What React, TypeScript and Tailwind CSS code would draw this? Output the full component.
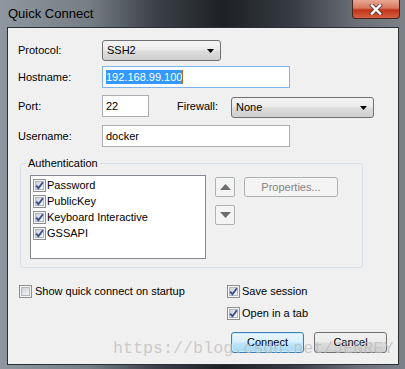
import React from "react";

function Check({ checked }: { checked: boolean }) {
  return (
    <svg width="13" height="13" viewBox="0 0 13 13" className="shrink-0">
      <defs>
        <linearGradient id="cbg" x1="0" y1="0" x2="1" y2="1">
          <stop offset="0" stopColor="#cbcfd5" />
          <stop offset="1" stopColor="#f6f6f6" />
        </linearGradient>
      </defs>
      <rect x="0.5" y="0.5" width="12" height="12" fill="#f4f4f4" stroke="#8f8f8f" />
      <rect x="2.5" y="2.5" width="8" height="8" fill="url(#cbg)" stroke="#b3b8be" />
      {checked && (
        <path d="M3.2 6.6 L5.4 9.2 L9.9 3.2" fill="none" stroke="#3b4f8e" strokeWidth="1.9" />
      )}
    </svg>
  );
}

function Select({ value, width }: { value: string; width: string }) {
  return (
    <div
      className={`${width} h-[21px] flex items-center justify-between pl-[4px] pr-[6px] border border-[#707070] rounded-[3px] bg-[linear-gradient(180deg,#f3f3f3_0%,#ebebeb_48%,#dddddd_52%,#cfcfcf_100%)]`}
    >
      <span>{value}</span>
      <svg width="7" height="4" viewBox="0 0 7 4">
        <polygon points="0,0 7,0 3.5,4" fill="#000" />
      </svg>
    </div>
  );
}

function Arrow({ up }: { up: boolean }) {
  return (
    <div className="w-[20px] h-[20px] flex items-center justify-center border border-[#adb2b5] rounded-[2px] bg-[#f4f4f4]">
      <svg width="11" height="6" viewBox="0 0 11 6">
        <polygon points={up ? "0,6 11,6 5.5,0" : "0,0 11,0 5.5,6"} fill="#6d6d6d" />
      </svg>
    </div>
  );
}

export default function App() {
  return (
    <div className="relative w-[405px] h-[369px] flex flex-col overflow-hidden font-['Liberation_Sans',Arial,sans-serif] text-[11px] text-black bg-[linear-gradient(90deg,#8e979f_0%,#767d84_22%,#3d4248_38%,#1d2125_55%,#363b41_72%,#6a7076_88%,#7c8287_100%)]">
      {/* title bar */}
      <div className="h-[27px] shrink-0 flex items-start justify-between">
        <span className="pl-[8px] pt-[6px] text-[13px] leading-[16px] text-black">Quick Connect</span>
        <div className="mr-[5px] w-[48px] h-[19px] flex items-center justify-center rounded-b-[4px] border border-t-0 border-[#4a2520] bg-[linear-gradient(180deg,#e9a894_0%,#d8765e_45%,#c0351b_55%,#d4603f_100%)]">
          <svg width="14" height="11" viewBox="0 0 14 11">
            <path d="M3 1.5 L11 9.5 M11 1.5 L3 9.5" stroke="#5b3a36" strokeWidth="4" strokeLinecap="square" />
            <path d="M3 1.5 L11 9.5 M11 1.5 L3 9.5" stroke="#ffffff" strokeWidth="2.4" strokeLinecap="square" />
          </svg>
        </div>
      </div>

      {/* client area */}
      <div className="flex-1 pl-[7px] pr-[6px] pb-[4px]">
        <div className="h-full flex flex-col pl-[10px] pt-[12px] border border-[#2b2f33] bg-[#f0f0f0]">
          <div className="h-[21px] flex items-center">
            <span className="w-[84px]">Protocol:</span>
            <Select value="SSH2" width="w-[119px]" />
          </div>

          <div className="mt-[5px] flex items-center">
            <span className="w-[84px]">Hostname:</span>
            <div className="w-[188px] h-[22px] flex items-center px-[3px] border border-[#7eb4ea] bg-white">
              <span className="bg-[#3399ff] text-white leading-[14px]">192.168.99.100</span>
              <span className="w-[1px] h-[14px] bg-[#b8691f]" />
            </div>
          </div>

          <div className="mt-[7px] flex items-start">
            <span className="w-[84px] self-center">Port:</span>
            <div className="w-[47px] h-[22px] flex items-center px-[3px] border border-[#abadb3] bg-white">22</div>
            <span className="ml-[28px] w-[54px] self-center">Firewall:</span>
            <div className="mt-[2px]">
              <Select value="None" width="w-[143px]" />
            </div>
          </div>

          <div className="mt-[7px] flex items-center">
            <span className="w-[84px]">Username:</span>
            <div className="w-[188px] h-[22px] flex items-center px-[3px] border border-[#abadb3] bg-white">docker</div>
          </div>

          <fieldset className="mt-[9px] ml-[2px] w-[343px] h-[112px] border border-[#d5dfe5] rounded-[3px]">
            <legend className="ml-[5px] px-[2px] leading-[14px]">Authentication</legend>
            <div className="flex items-start pl-[9px] pt-[5px]">
              <div className="w-[176px] h-[84px] border border-[#828790] bg-white pl-[2px] pt-[1px] flex flex-col">
                {["Password", "PublicKey", "Keyboard Interactive", "GSSAPI"].map((t) => (
                  <div key={t} className="h-[16px] flex items-center gap-[1px]">
                    <Check checked />
                    <span>{t}</span>
                  </div>
                ))}
              </div>
              <div className="ml-[9px] mt-[2px] flex flex-col gap-[8px]">
                <Arrow up />
                <Arrow up={false} />
              </div>
              <div className="ml-[9px] mt-[2px] w-[94px] h-[20px] flex items-center justify-center border border-[#adb2b5] rounded-[3px] bg-[#f4f4f4] text-[#838383]">
                Properties...
              </div>
            </div>
          </fieldset>

          <div className="mt-[17px] flex items-start">
            <div className="ml-[1px] w-[208px] h-[13px] flex items-center gap-[3px]">
              <Check checked={false} />
              <span>Show quick connect on startup</span>
            </div>
            <div className="flex flex-col">
              <div className="h-[13px] flex items-center gap-[2px]">
                <Check checked />
                <span>Save session</span>
              </div>
              <div className="mt-[9px] h-[13px] flex items-center gap-[2px]">
                <Check checked />
                <span>Open in a tab</span>
              </div>
              <div className="mt-[12px] ml-[4px] flex gap-[10px]">
                <div className="w-[73px] h-[21px] flex items-center justify-center rounded-[3px] border border-[#3c7fb1] shadow-[inset_0_0_0_1px_#c7ecfc] bg-[linear-gradient(180deg,#eaf6fd_0%,#d9f0fc_48%,#bee6fd_52%,#a7d9f5_100%)]">
                  Connect
                </div>
                <div className="w-[73px] h-[21px] flex items-center justify-center rounded-[3px] border border-[#707070] bg-[linear-gradient(180deg,#f2f2f2_0%,#ebebeb_48%,#dddddd_52%,#cfcfcf_100%)]">
                  Cancel
                </div>
              </div>
            </div>
          </div>
        </div>
      </div>

      {/* watermark */}
      <span className="absolute left-[113px] top-[339px] leading-[20px] text-[16.7px] font-['Liberation_Mono','Courier_New',monospace] text-[rgba(185,185,185,0.7)] pointer-events-none">
        https://blog.csdn.net/JENREY
      </span>
    </div>
  );
}
